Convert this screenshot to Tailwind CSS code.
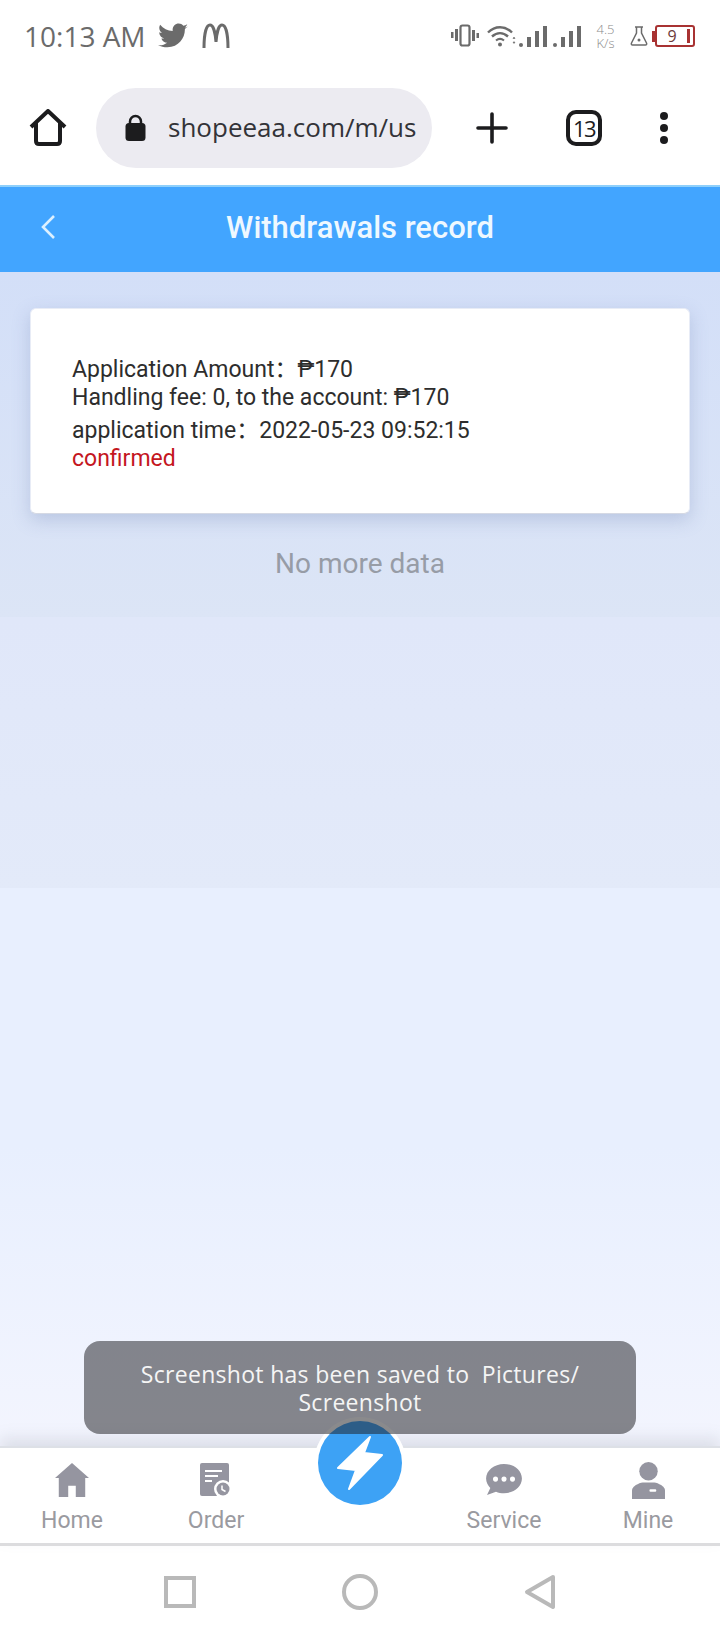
<!DOCTYPE html>
<html lang="en">
<head>
    <meta charset="UTF-8">
    <meta name="viewport" content="width=device-width, initial-scale=1.0">
    <title>Withdrawals record</title>
    <script src="https://cdn.jsdelivr.net/npm/@tailwindcss/browser@4"></script>
</head>
<body class="w-[720px] h-[1640px] overflow-hidden bg-white font-['Roboto','Noto_Sans_CJK_SC',sans-serif]">
    <div class="relative flex flex-col h-[1640px]">
        <!-- status bar -->
        <div class="h-[72px] flex items-center pl-6 pr-[25px] text-[#6b6b6b]">
            <span class="font-['Open_Sans',sans-serif] text-[28px] leading-none">10:13 AM</span>
            <svg class="ml-[12px]" width="30" height="26" viewBox="0 0 24 20" fill="#6b6b6b"><path d="M24 2.4c-.9.4-1.8.7-2.8.8 1-.6 1.8-1.6 2.2-2.7-1 .6-2 1-3.1 1.2C19.3.7 18 0 16.6 0c-2.7 0-4.9 2.2-4.9 4.9 0 .4 0 .8.1 1.1C7.7 5.8 4.1 3.9 1.700.9c-.4.7-.7 1.600-.7 2.500 0 1.700.9 3.200 2.200 4.100-.8 0-1.600-.2-2.200-.6v.1c0 2.400 1.700 4.400 3.900 4.800-.4.1-.8.2-1.300.2-.3 0-.6 0-.9-.1.6 2 2.400 3.400 4.600 3.400-1.700 1.300-3.800 2.100-6.100 2.100-.4 0-.8 0-1.200-.1C2.200 18.300 4.800 19 7.500 19c9.100 0 14-7.500 14-14v-.6c1-.7 1.800-1.600 2.500-2z"/></svg>
            <svg class="ml-[14px]" width="28" height="26" viewBox="0 0 28 26" fill="none" stroke="#6b6b6b" stroke-width="3"><path d="M2 25C2 12 4 2 8 2c3.500 0 5.500 9 6 17 .5-8 2.500-17 6-17 4 0 6 10 6 23"/></svg>
            <div class="ml-auto flex items-center">
                <svg width="28" height="24" viewBox="0 0 28 24" fill="#6b6b6b"><rect x="0" y="8" width="2.500" height="6"/><rect x="4" y="5" width="3" height="12"/><rect x="9.500" y="1.500" width="9" height="20" rx="2" fill="none" stroke="#6b6b6b" stroke-width="2.200"/><rect x="21" y="6" width="3" height="11"/><rect x="25.500" y="9" width="2.500" height="5"/></svg>
                <svg class="ml-[8px]" width="29" height="24" viewBox="0 0 29 24" fill="none" stroke="#6b6b6b"><path d="M1 8.500c7-7 17-7 24 0" stroke-width="2.400"/><path d="M5 12.500c5-4.500 11-4.500 16 0" stroke-width="2.400"/><path d="M9 16.500c2.500-2 5.500-2 8 0" stroke-width="2.200"/><circle cx="13" cy="20.500" r="2" fill="#6b6b6b" stroke="none"/><path d="M26 14.500l2 0-1-1.500zM26 18l2 0-1 1.500z" fill="#6b6b6b" stroke-width=".6"/></svg>
                <div class="ml-[3px] flex items-end h-[22px] gap-[4px]">
                    <span class="w-[4px] h-[4px] bg-[#6b6b6b] rounded-full"></span><span class="w-[4px] h-[10px] bg-[#6b6b6b]"></span><span class="w-[4px] h-[16px] bg-[#6b6b6b]"></span><span class="w-[4px] h-[21px] bg-[#6b6b6b]"></span>
                </div>
                <div class="ml-[6px] flex items-end h-[22px] gap-[4px]">
                    <span class="w-[4px] h-[4px] bg-[#6b6b6b] rounded-full"></span><span class="w-[4px] h-[10px] bg-[#6b6b6b]"></span><span class="w-[4px] h-[16px] bg-[#6b6b6b]"></span><span class="w-[4px] h-[21px] bg-[#6b6b6b]"></span>
                </div>
                <div class="ml-[14px] w-[21px] flex flex-col items-center text-[13px] font-light leading-[14px] text-[#8a8a8a] font-['Open_Sans',sans-serif]"><span>4.5</span><span>K/s</span></div>
                <svg class="ml-[14px]" width="18" height="20" viewBox="0 0 18 20" fill="none" stroke="#6b6b6b" stroke-width="1.500"><path d="M5 1h8M6.500 1v6L1.500 17c-.5 1 0 2 1 2h13c1 0 1.500-1 1-2l-5-10V1"/><circle cx="9" cy="14" r="1.500" fill="#6b6b6b" stroke="none"/></svg>
                <span class="ml-[4px] w-[3px] h-[11px] bg-[#a83232]"></span>
                <div class="w-[40px] h-[22px] border-2 border-[#a83232] rounded-[3px] flex items-center pr-[3px]">
                    <span class="flex-1 text-center text-[16px] leading-none text-[#6b3a3a] font-['Open_Sans',sans-serif]">9</span>
                    <span class="w-[3px] h-[14px] bg-[#a83232]"></span>
                </div>
            </div>
        </div>
        <!-- browser bar -->
        <div class="h-[113px] flex items-center pt-[15px] pb-[17px]">
            <div class="w-[96px] flex justify-center">
                <svg width="38" height="38" viewBox="0 0 38 38" fill="none" stroke="#1c1c1e" stroke-width="4" stroke-linejoin="round"><path d="M2 18L19 2l17 16M7 14v18c0 2 1 3 3 3h18c2 0 3-1 3-3V14"/></svg>
            </div>
            <div class="w-[336px] h-[80px] rounded-full bg-[#ecebf1] flex items-center pl-[29px] overflow-hidden">
                <svg width="21" height="28" viewBox="0 0 21 28" fill="#1c1c1e"><path d="M5 12V7.500a5.500 5.500 0 0 1 11 0V12" fill="none" stroke="#1c1c1e" stroke-width="2.500"/><rect x="0.500" y="9" width="20" height="18" rx="3.500"/></svg>
                <span class="ml-[22px] mb-[1px] font-['Open_Sans',sans-serif] text-[26px] leading-none text-[#333338] whitespace-nowrap">shopeeaa.com/m/us</span>
            </div>
            <div class="flex-1 flex items-center pl-[44px]">
                <svg width="32" height="32" viewBox="0 0 32 32" stroke="#1c1c1e" stroke-width="3.600" stroke-linecap="round"><path d="M16 2v28M2 16h28"/></svg>
                <div class="ml-[58px] w-[36px] h-[36px] border-[4px] border-[#1c1c1e] rounded-[10px] flex items-center justify-center font-['Open_Sans',sans-serif] text-[22px] leading-none tracking-[-1.500px] text-[#1c1c1e]">13</div>
                <div class="ml-[58px] flex flex-col gap-[4px]">
                    <span class="w-[8px] h-[8px] rounded-full bg-[#1c1c1e]"></span>
                    <span class="w-[8px] h-[8px] rounded-full bg-[#1c1c1e]"></span>
                    <span class="w-[8px] h-[8px] rounded-full bg-[#1c1c1e]"></span>
                </div>
            </div>
        </div>
        <!-- page header -->
        <div class="h-[87px] bg-[#42a5ff] border-t-[2px] border-[#8fd0fb] flex items-center justify-center relative pb-[4px]">
            <svg class="absolute left-[40px] top-[27px]" width="16" height="26" viewBox="0 0 16 26" fill="none" stroke="#dcf0ff" stroke-width="2.600"><path d="M14 2L3 13l11 11"/></svg>
            <h1 class="text-[31px] font-medium text-[#eef8ff] leading-none">Withdrawals record</h1>
        </div>
        <!-- content -->
        <div class="h-[1174px] bg-[#e8effe] relative">
            <div class="absolute inset-x-0 top-0 h-[345px] bg-gradient-to-b from-[#d3dff8] to-[#dce5f6]"></div>
            <div class="absolute inset-x-0 top-[345px] h-[271px] bg-gradient-to-b from-[#e0e7f9] to-[#e3eaf9]"></div>
            <div class="absolute inset-x-0 bottom-0 h-[300px] bg-gradient-to-b from-[#e8effe] to-[#f3f5fe]"></div>
            <div class="relative px-[30px] pt-[36px]">
                <div class="h-[206px] bg-white rounded-[6px] border border-[#e8ecf6] border-b-[#d5d9e4] shadow-[0_6px_18px_rgba(110,130,180,0.3)] pl-[41px] pt-[47px] text-[23px] text-[#2d2d2d] leading-[28px]">
                    <p>Application Amount：₱170</p>
                    <p>Handling fee: 0, to the account: ₱170</p>
                    <p class="mt-[5px]">application time：2022-05-23 09:52:15</p>
                    <p class="text-[#c4161e]">confirmed</p>
                </div>
                <p class="mt-[36px] text-center text-[28px] leading-none text-[#979ca6]">No more data</p>
            </div>
        </div>
        <!-- tab bar -->
        <div class="h-[100px] bg-white border-t-[2px] border-[#dde0e6] border-b-[3px] border-b-[#dcdcde] shadow-[0_-8px_14px_rgba(120,125,140,0.18)] grid grid-cols-5 text-[#9a9aa0] text-[23px] leading-none text-center relative">
            <div class="flex flex-col items-center pt-[12px]">
                <div class="h-[40px] flex items-center">
                    <svg width="34" height="34" viewBox="0 0 36 36" fill="#9595a0"><path d="M18 0L0 16h4v20h10V24h8v12h10V16h4z"/></svg>
                </div>
                <span class="mt-[9px]">Home</span>
            </div>
            <div class="flex flex-col items-center pt-[12px]">
                <div class="h-[40px] flex items-center">
                    <svg width="32" height="35" viewBox="0 0 32 35"><rect width="29" height="33" rx="2" fill="#9595a0"/><path d="M5 8h17M5 13h13M5 18h7" stroke="#fff" stroke-width="2"/><circle cx="23" cy="26" r="9" fill="#fff"/><circle cx="23" cy="26" r="6.500" fill="#9595a0"/><path d="M22 22.500v4l3.500 2" stroke="#fff" stroke-width="1.500" fill="none"/></svg>
                </div>
                <span class="mt-[9px]">Order</span>
            </div>
            <div></div>
            <div class="flex flex-col items-center pt-[12px]">
                <div class="h-[40px] flex items-center">
                    <svg width="38" height="33" viewBox="0 0 38 35" fill="#9595a0"><path d="M19 0c10.500 0 19 6.800 19 15.500S29.500 31 19 31c-3 0-6-.5-8.500-1.600L1 33l3.500-7.500C2 23 0 19.500 0 15.500 0 6.800 8.500 0 19 0z"/><circle cx="10" cy="16" r="2.700" fill="#fff"/><circle cx="19" cy="16" r="2.700" fill="#fff"/><circle cx="28" cy="16" r="2.700" fill="#fff"/></svg>
                </div>
                <span class="mt-[9px]">Service</span>
            </div>
            <div class="flex flex-col items-center pt-[12px]">
                <div class="h-[40px] flex items-center">
                    <svg width="33" height="37" viewBox="0 0 34 38" fill="#9595a0"><circle cx="17" cy="9.500" r="9.500"/><path d="M0 38V29c0-4 7-7.500 11-8h12c4 .5 11 4 11 8v9z"/><rect x="18" y="28" width="7" height="2.500" rx="1" fill="#fff"/></svg>
                </div>
                <span class="mt-[9px]">Mine</span>
            </div>
        </div>
        <!-- android nav -->
        <div class="flex-1 bg-white flex items-center justify-center gap-[146px] pb-[2px]">
            <span class="w-[32px] h-[32px] border-[4px] border-[#b9b9b9]"></span>
            <span class="w-[36px] h-[36px] border-[4px] border-[#b9b9b9] rounded-full"></span>
            <svg width="32" height="36" viewBox="0 0 32 36" fill="none" stroke="#b9b9b9" stroke-width="4" stroke-linejoin="round"><path d="M29 3L3 18l26 15z"/></svg>
        </div>
        <!-- fab -->
        <div class="absolute left-[314px] top-[1417px] w-[92px] h-[92px] rounded-full bg-white flex items-center justify-center">
            <div class="w-[84px] h-[84px] rounded-full bg-[#3da2f5] flex items-center justify-center">
                <svg width="48" height="56" viewBox="0 0 48 56" fill="#fff" stroke="#fff" stroke-width="2" stroke-linejoin="round"><path d="M34 2L2 33l18 2-7 19 33-34-18-2z"/></svg>
            </div>
        </div>
        <!-- toast -->
        <div class="absolute left-[84px] top-[1341px] w-[552px] h-[93px] rounded-[16px] bg-[#1f1f23]/52 flex flex-col items-center justify-center font-['Open_Sans',sans-serif] text-[23px] leading-[28px] tracking-[0.3px] text-[#f5f5f5]">
            <span class="whitespace-pre">Screenshot has been saved to  Pictures/</span>
            <span>Screenshot</span>
        </div>
    </div>
</body>
</html>
